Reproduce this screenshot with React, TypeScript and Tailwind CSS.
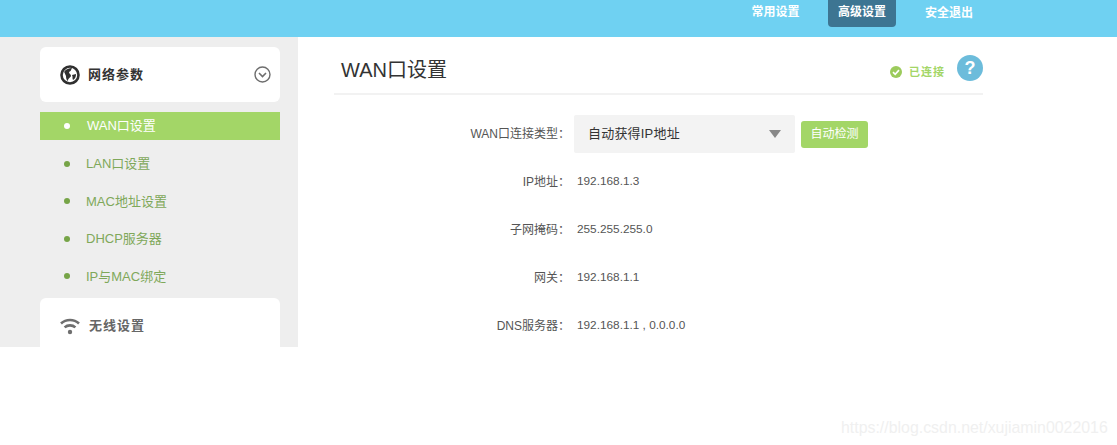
import React from 'react';

const font = { cn: "font-['Liberation_Sans','Noto_Sans_CJK_SC',sans-serif]" };

const subItems = ['WAN口设置', 'LAN口设置', 'MAC地址设置', 'DHCP服务器', 'IP与MAC绑定'];

const rows = [
  { label: 'IP地址：', value: '192.168.1.3' },
  { label: '子网掩码：', value: '255.255.255.0' },
  { label: '网关：', value: '192.168.1.1' },
  { label: 'DNS服务器：', value: '192.168.1.1 , 0.0.0.0' },
];

const GlobeIcon = () => (
  <svg width="20" height="20" viewBox="0 0 20 20">
    <circle cx="10" cy="10" r="8.5" fill="none" stroke="#2f2f2f" strokeWidth="2.6" />
    <path d="M4 7c2-3 5-4 8-4-1 2-1 3-3 4 0 2 2 2 2 4-1 2-3 2-3 5-2-1-2-4-2-5-1-2-1-3-2-4z" fill="#2f2f2f" />
    <path d="M12 10l4-1c0 3-1 5-3 6-1-2 0-3-1-5z" fill="#2f2f2f" />
  </svg>
);

const ChevronCircle = () => (
  <svg width="17" height="17" viewBox="0 0 17 17" fill="none" stroke="#6e6e6e">
    <circle cx="8.5" cy="8.5" r="7.5" strokeWidth="1.4" />
    <path d="M5 7l3.5 3.5L12 7" strokeWidth="1.6" />
  </svg>
);

const WifiIcon = () => (
  <svg width="20" height="18" viewBox="0 0 20 18" fill="none" stroke="#6f6f6f" strokeWidth="2.6">
    <path d="M1 6.5c5-4.6 13-4.6 18 0" />
    <path d="M4.6 10.4c3-2.7 7.8-2.7 10.8 0" />
    <circle cx="10" cy="15" r="2.2" fill="#6f6f6f" stroke="none" />
  </svg>
);

const CheckBadge = () => (
  <svg width="12" height="12" viewBox="0 0 12 12">
    <circle cx="6" cy="6" r="6" fill="#9ccb5c" />
    <path d="M3 6.2l2.2 2.1L9 4.2" fill="none" stroke="#fff" strokeWidth="1.7" />
  </svg>
);

export default function App() {
  return (
    <div className={`relative h-[445px] w-[1117px] overflow-hidden bg-white ${font.cn}`}>
      <header className="flex h-[37px] items-start bg-[#6fd1f2] pl-[734px] text-xs font-bold text-white">
        <div className="flex h-[37px] w-[84px] items-center justify-center pb-[13px] pr-[1px]">常用设置</div>
        <div className="ml-[10px] flex h-[27px] w-[68px] items-center justify-center rounded-b-[4px] bg-[#3d7592] pb-[3px]">高级设置</div>
        <div className="ml-[15px] flex h-[25px] w-[76px] items-center justify-center">安全退出</div>
      </header>

      <div className="flex h-[310px] overflow-hidden">
        <aside className="w-[298px] shrink-0 bg-[#eeeeee] pl-[40px] pr-[18px] pt-[10px]">
          <div className="flex h-[55px] items-center rounded-[6px] bg-white pl-[20px] pr-[9px]">
            <GlobeIcon />
            <span className="ml-[8px] text-[13px] font-bold tracking-[1px] text-[#333333]">网络参数</span>
            <span className="ml-auto flex"><ChevronCircle /></span>
          </div>
          <ul className="mt-[10px]">
            {subItems.map((item, i) => (
              <li
                key={item}
                className={`flex items-center text-[13px] ${i === 0 ? 'mb-[5px] h-[28px] bg-[#a3d667] text-white' : 'h-[37.5px] text-[#7fa85a]'}`}
              >
                <span className={`ml-[24px] h-[6px] w-[6px] rounded-full ${i === 0 ? 'bg-white' : 'bg-[#76a447]'}`} />
                <span className={i === 0 ? 'ml-[17px]' : 'ml-[16px]'}>{item}</span>
              </li>
            ))}
          </ul>
          <div className="mt-[3px] flex h-[55px] items-center rounded-[6px] bg-white pl-[20px]">
            <WifiIcon />
            <span className="ml-[9px] text-[13px] font-bold tracking-[1px] text-[#666666]">无线设置</span>
          </div>
        </aside>

        <main className="w-[685px] pl-[36px]">
          <div className="flex h-[58px] w-[649px] items-center border-b-2 border-[#f2f2f2] pl-[7px]">
            <h1 className="pt-[10px] text-xl font-normal text-[#333333]">WAN口设置</h1>
            <div className="ml-auto mt-[14px] flex items-center text-[11px] font-bold tracking-[1px] text-[#a3d667]">
              <CheckBadge />
              <span className="ml-[7px]">已连接</span>
            </div>
            <div className="ml-[12px] mt-[6px] flex h-[26px] w-[26px] items-center justify-center rounded-full bg-[#6cbcdb] text-lg font-bold text-white">?</div>
          </div>

          <div className="mt-[20px] flex h-[38px] items-center text-xs text-[#555555]">
            <span className="w-[236px] text-right">WAN口连接类型：</span>
            <div className="ml-[4px] flex h-[38px] w-[221px] items-center rounded-[2px] bg-[#f3f3f3] px-[14px] text-[13px] tracking-[0.2px] text-[#333333]">
              <span>自动获得IP地址</span>
              <span className="ml-auto h-0 w-0 border-x-[6px] border-t-[8px] border-x-transparent border-t-[#888888]" />
            </div>
            <button className="ml-[6px] h-[27px] w-[67px] rounded-[3px] bg-[#a3d667] text-xs text-white">自动检测</button>
          </div>

          <div className="mt-[5px]">
            {rows.map((r) => (
              <div key={r.label} className="flex h-[48px] items-center text-xs text-[#555555]">
                <span className="w-[236px] text-right">{r.label}</span>
                <span className="ml-[7px] text-[11.8px]">{r.value}</span>
              </div>
            ))}
          </div>
        </main>
      </div>

      <div className="absolute left-[841px] top-[416px] text-[15.9px] text-[#f0f0f0]">https://blog.csdn.net/xujiamin0022016</div>
    </div>
  );
}
